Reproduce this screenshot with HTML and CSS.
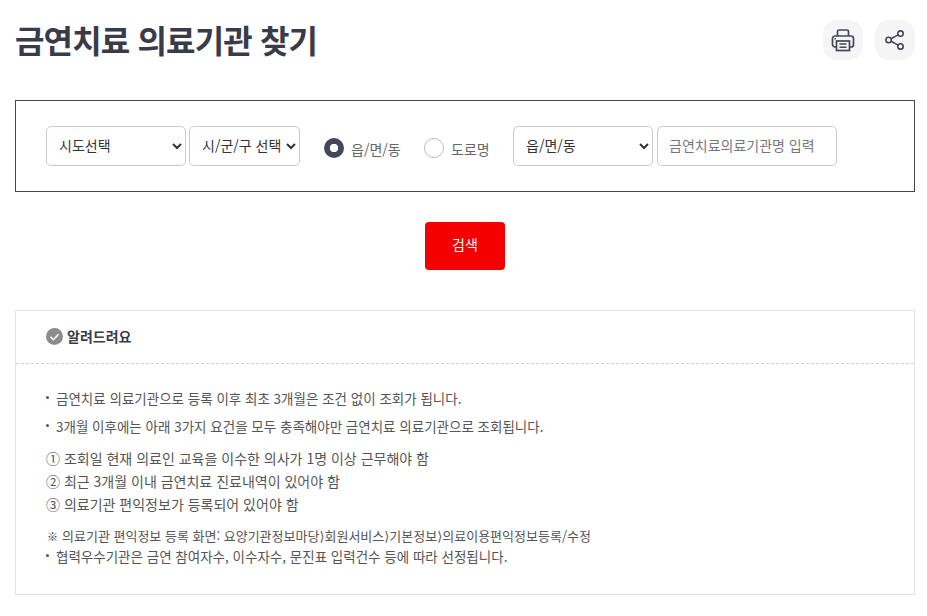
FILE: index.html
```html
<!DOCTYPE html>
<html lang="ko">
<head>
<meta charset="utf-8">
<title>금연치료 의료기관 찾기</title>
<link rel="stylesheet" href="styles.css">
</head>
<body>
<header class="head">
  <h1 class="title">금연치료 의료기관 찾기</h1>
  <div class="tools">
    <button class="tool" aria-label="인쇄"><svg width="24" height="24" viewBox="0 0 24 24" fill="none" stroke="#444659" stroke-width="1.7"><path d="M6.5 8V3.5a1.5 1.5 0 0 1 1.5-1.5h8a1.5 1.5 0 0 1 1.5 1.5V8"/><rect x="1.5" y="8" width="21" height="11" rx="2.5"/><rect x="5.5" y="13" width="13" height="9.5" fill="#f5f5f7"/><path d="M8.5 16h7M8.5 19.3h7M3.5 10.8h1.5" stroke-width="1.4"/></svg></button>
    <button class="tool" aria-label="공유"><svg width="20" height="20" viewBox="0 0 20 20" fill="none" stroke="#444659" stroke-width="1.6"><circle cx="15.5" cy="3.6" r="2.7"/><circle cx="15.5" cy="16.4" r="2.7"/><circle cx="3.6" cy="10" r="2.7"/><path d="M6 8.7l7.2-3.8M6 11.3l7.2 3.8"/></svg></button>
  </div>
</header>
<form class="search">
  <select class="sel sel-a"><option>시도선택</option></select>
  <select class="sel sel-b"><option>시/군/구 선택</option></select>
  <label class="radio radio-first"><span class="dot on"></span><span class="radio-text">읍/면/동</span></label>
  <label class="radio radio-second"><span class="dot"></span><span class="radio-text">도로명</span></label>
  <select class="sel sel-c"><option>읍/면/동</option></select>
  <input class="txt" placeholder="금연치료의료기관명 입력">
</form>
<div class="actions"><button class="btn" type="button">검색</button></div>
<section class="notice">
  <h2 class="notice-head"><svg width="17" height="17" viewBox="0 0 17 17"><circle cx="8.5" cy="8.5" r="8.5" fill="#8c8c8c"/><path d="M4.5 8.7l3 3 5-5.5" fill="none" stroke="#fff" stroke-width="1.6"/></svg>알려드려요</h2>
  <div class="notice-body">
    <p class="bul b1">금연치료 의료기관으로 등록 이후 최초 3개월은 조건 없이 조회가 됩니다.</p>
    <p class="bul b2">3개월 이후에는 아래 3가지 요건을 모두 충족해야만 금연치료 의료기관으로 조회됩니다.</p>
    <ol class="nums">
      <li>① 조회일 현재 의료인 교육을 이수한 의사가 1명 이상 근무해야 함</li>
      <li>② 최근 3개월 이내 금연치료 진료내역이 있어야 함</li>
      <li>③ 의료기관 편익정보가 등록되어 있어야 함</li>
    </ol>
    <p class="ref"><span class="ref-mark">※</span>의료기관 편익정보 등록 화면: 요양기관정보마당<span class="gt">⟩</span>회원서비스<span class="gt">⟩</span>기본정보<span class="gt">⟩</span>의료이용편익정보등록/수정</p>
    <p class="bul b3">협력우수기관은 금연 참여자수, 이수자수, 문진표 입력건수 등에 따라 선정됩니다.</p>
  </div>
</section>
</body>
</html>
```
FILE: styles.css
```css
* { box-sizing: border-box; }
html, body { margin: 0; padding: 0; }
body { padding: 0 12px 0 15px; font-family: "Noto Sans CJK KR", "Noto Sans", sans-serif; color: #444; background: #fff; }
.head { display: flex; justify-content: space-between; align-items: center; height: 80px; }
.title { margin: 0 0 2px; font-size: 32px; font-weight: 700; color: #3a3b49; letter-spacing: -0.85px; }
.tools { display: flex; gap: 12px; }
.tool { width: 40px; height: 40px; border: 0; border-radius: 14px; background: #f5f5f7; display: flex; align-items: center; justify-content: center; padding: 0; }
.search { margin-top: 20px; height: 92px; border: 1px solid #444659; display: flex; align-items: center; padding-left: 30px; }
.sel { height: 40px; border: 1px solid #ccc; border-radius: 5px; background: #fff; font: 14px "Noto Sans CJK KR", sans-serif; color: #333; padding: 0 0 2px 8px; }
.sel-a { width: 140px; margin-right: 3px; }
.sel-b { width: 111px; }
.sel-c { width: 140px; margin-right: 4px; }
.radio { display: flex; align-items: center; font-size: 14px; color: #666; margin-top: 4px; }
.radio-first { margin-left: 24px; width: 100px; }
.radio-second { width: 89px; }
.radio-text { margin-top: 2px; }
.dot { width: 20px; height: 20px; border-radius: 50%; border: 1px solid #bbb; margin-right: 7px; background: #fff; }
.dot.on { border: 0; background: radial-gradient(circle, #fff 0 4px, #444659 4.5px); }
.txt { width: 180px; height: 40px; border: 1px solid #ccc; border-radius: 5px; padding: 0 11px 2px; font: 14px "Noto Sans CJK KR", sans-serif; }
.txt::placeholder { color: #777; }
.actions { display: flex; justify-content: center; margin-top: 30px; }
.btn { width: 80px; height: 48px; border: 0; border-radius: 4px; background: #f40000; color: #fff; font: 14px "Noto Sans CJK KR", sans-serif; padding: 0 0 4px; }
.notice { margin-top: 40px; border: 1px solid #e2e2e2; height: 285px; }
.notice-head { margin: 0; height: 53px; display: flex; align-items: center; gap: 4px; padding: 0 0 2px 30px; font-size: 14px; font-weight: 700; color: #3a3b49; border-bottom: 1px dashed #d0d0d0; }
.notice-body { padding: 0 30px; font-size: 13.5px; color: #555; }
.notice-body p { margin: 0; }
.bul { position: relative; padding-left: 10px; }
.bul::before { content: ""; position: absolute; left: 0; top: 8px; width: 3px; height: 3px; border-radius: 50%; background: #555; }
.b1 { margin-top: 24px !important; }
.b2 { margin-top: 8px !important; }
.nums { list-style: none; margin: 11px 0 0; padding: 0; font-size: 14px; line-height: 23px; }
.ref { margin-top: 11px !important; font-size: 13px; line-height: 18px; }
.ref-mark { display: inline-block; width: 16px; font-size: 11px; padding-left: 1px; color: #333; }
.gt { font-family: "DejaVu Sans", sans-serif; }
.b3 { margin-top: 0 !important; }
```
